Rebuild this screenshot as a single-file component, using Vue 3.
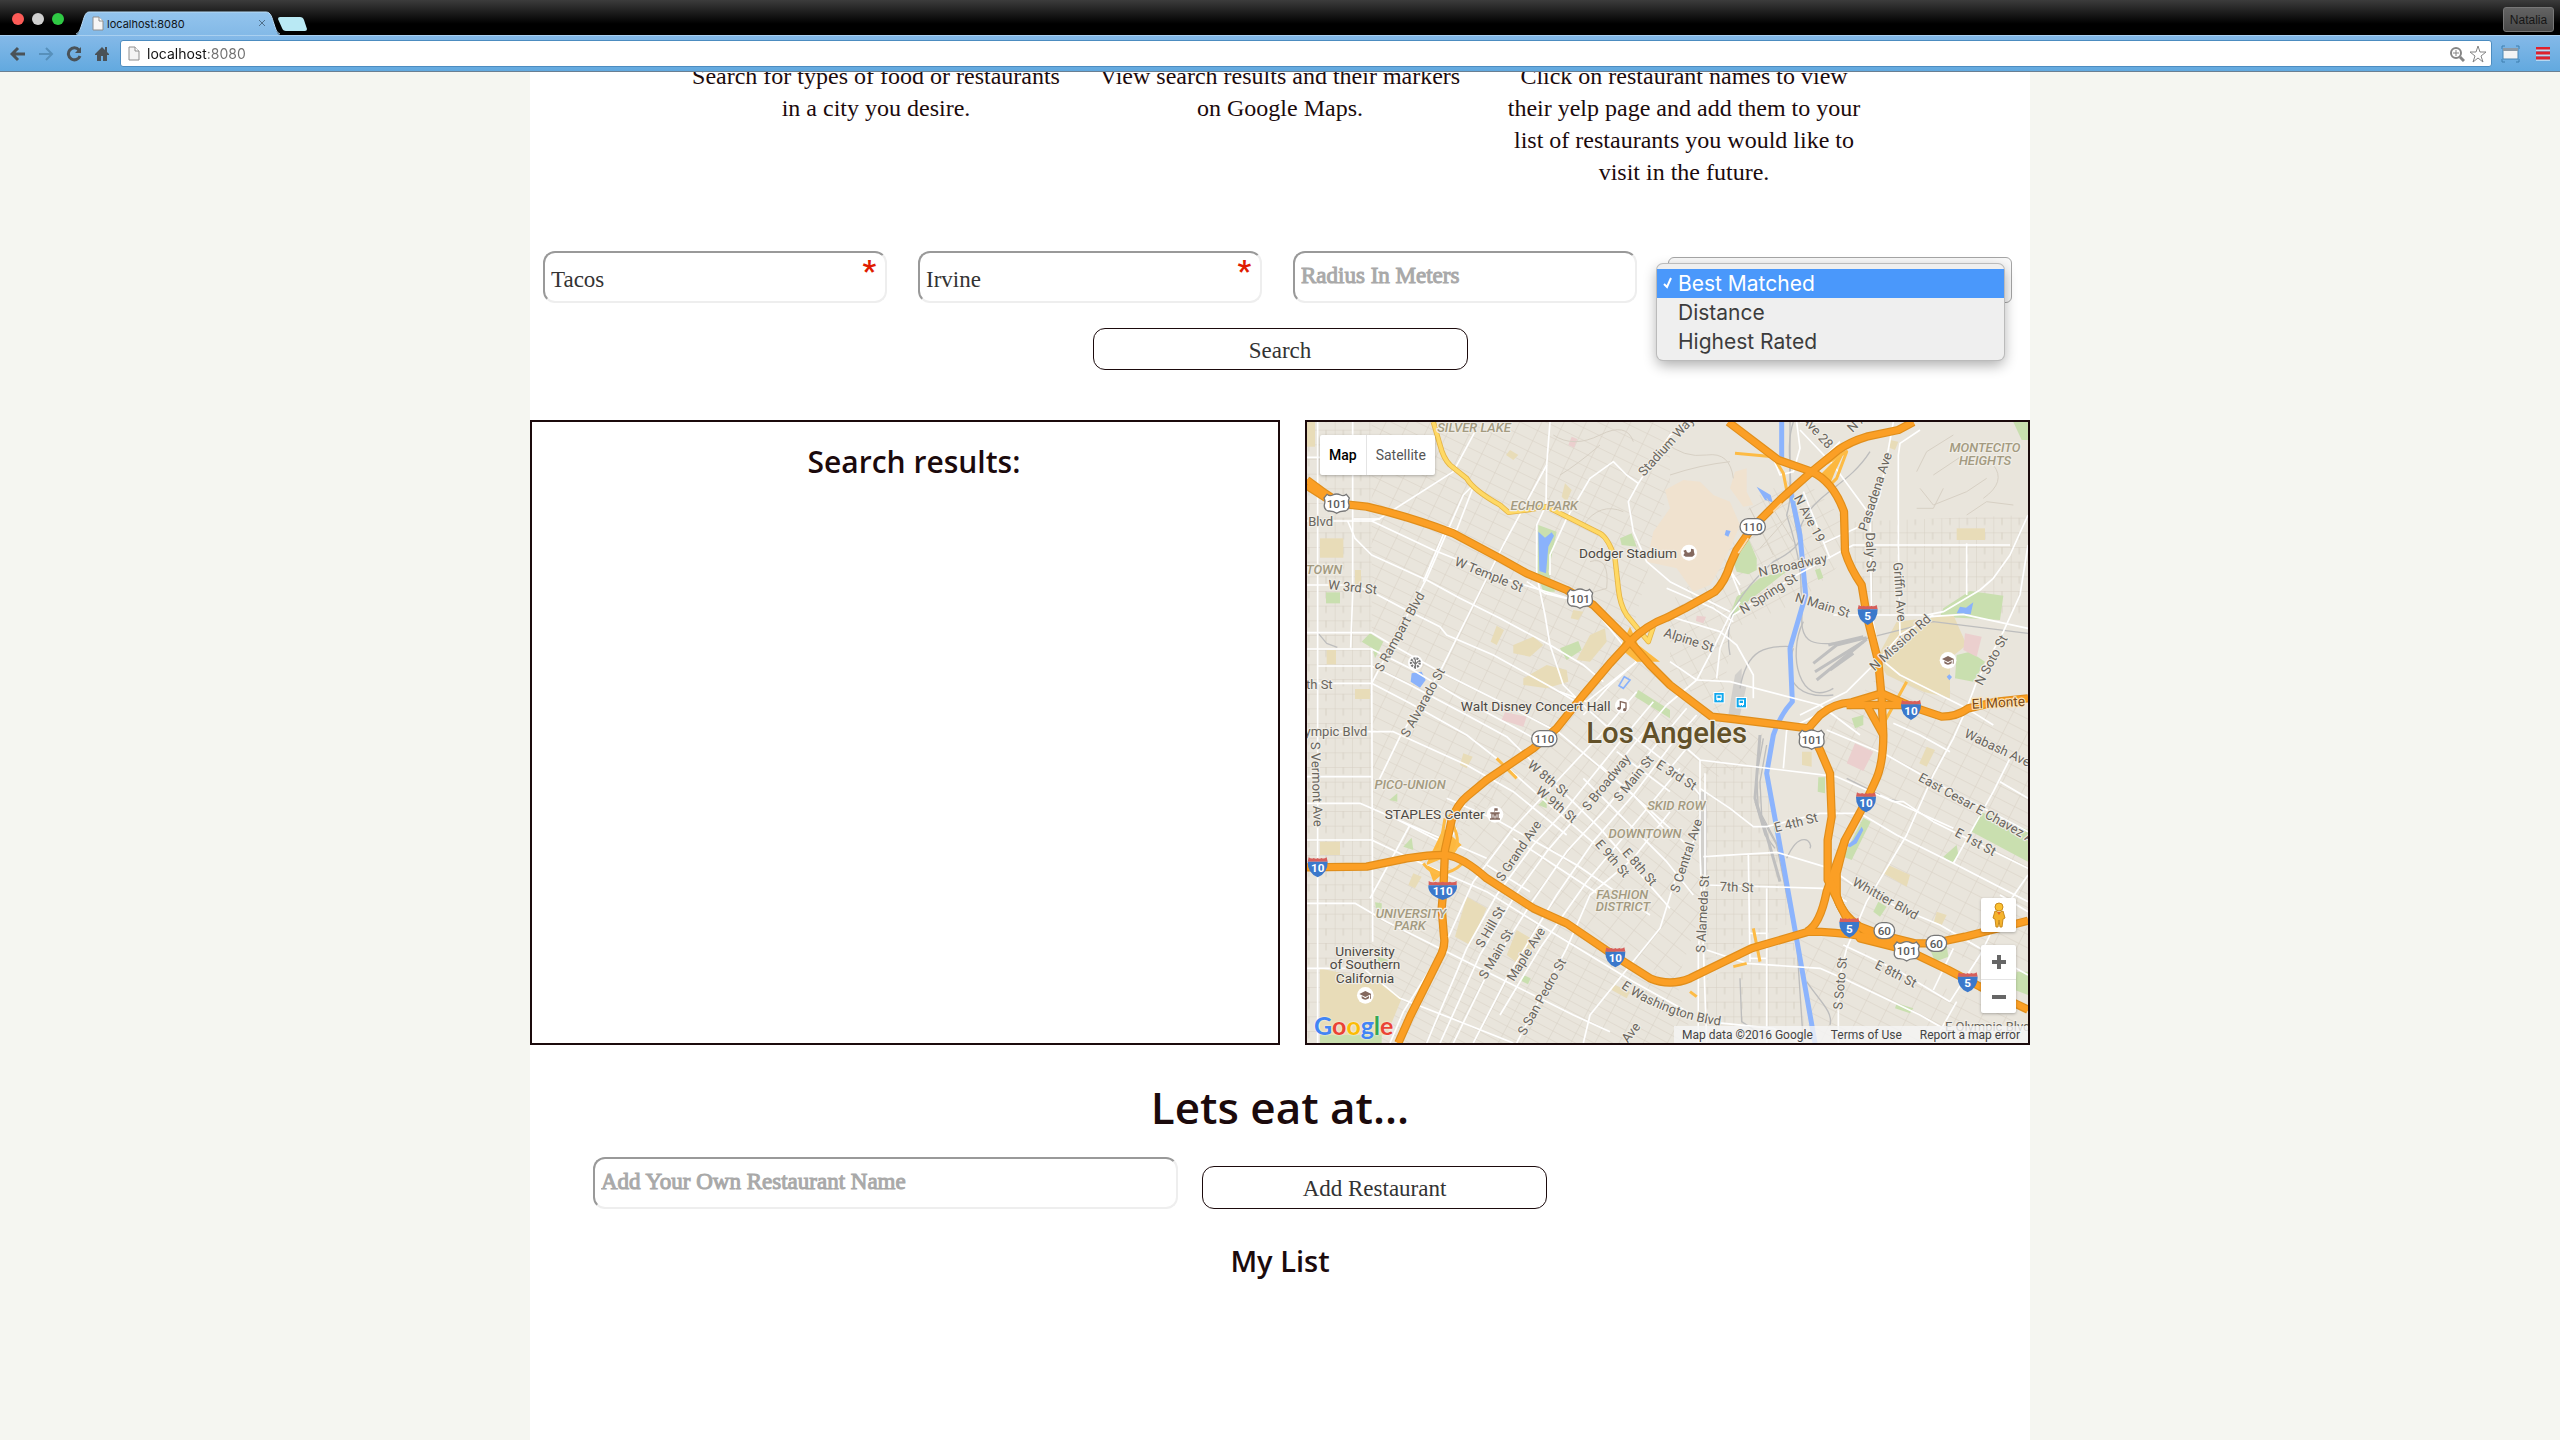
<script setup>
import { ref } from 'vue'

const food = ref('Tacos')
const city = ref('Irvine')
const radius = ref('')
const sort = ref('Best Matched')
const sortOptions = ['Best Matched', 'Distance', 'Highest Rated']
const ownRestaurant = ref('')
const url = ref('localhost:8080')

const steps = [
  'Search for types of food or restaurants in a city you desire.',
  'View search results and their markers on Google Maps.',
  'Click on restaurant names to view their yelp page and add them to your list of restaurants you would like to visit in the future.'
]

// Street network, in map units
const blocks = [
  { grid: 'gridStraight', d: 'M21 21H215V1884H21Z' },
  { grid: 'gridWest', d: 'M215 21H1110V200L990 680L760 960L430 1320L215 1260Z' },
  { grid: 'gridDowntown', d: 'M990 680L1240 910L1400 960L1380 1030L1220 1100L1200 1500L1130 1700L940 1600L440 1320L560 1100L760 960Z' },
  { grid: 'gridSouth', d: 'M215 1260L440 1320L940 1610L1130 1700L1180 1884H215Z' },
  { grid: 'gridStraight', d: 'M1660 320L2184 300V600H1700L1660 480Z' },
  { grid: 'gridNorth', d: 'M1110 560L1280 420L1360 250L1500 180L1620 300L1640 430L1500 560L1300 640L1260 900L1110 780Z' },
  { grid: 'gridStraight', d: 'M1210 1040L1390 1060L1480 1520L1210 1640Z' },
  { grid: 'gridEast', d: 'M1560 960L1740 780L2184 880V1700L1640 1500L1600 1300Z' },
  { grid: 'gridEast', d: 'M1600 1570L2184 1830V1884H1530L1500 1570Z' },
  { grid: 'gridStraight', d: 'M1200 1700L1480 1570L1520 1884H1180Z' }
]

const areas = [
  { c: 'stadium', d: 'M1095 225L1150 195L1200 200L1240 240L1290 260L1320 330L1290 400L1260 460L1230 510L1180 530L1130 460L1040 440L1060 350L1110 280Z' },
  { c: 'stadium', d: 'M1305 170L1340 160L1340 230L1360 270L1330 275L1290 220Z' },
  { c: 'green', d: 'M715 330L770 350L745 470L765 530L730 530L712 480Z' },
  { c: 'green', d: 'M960 370L995 355L1010 395L965 390Z' },
  { c: 'green', d: 'M78 532H120V565H78Z' },
  { c: 'green', d: 'M185 680L210 655L250 680L225 730L218 700Z' },
  { c: 'green', d: 'M780 700L835 678L845 705L800 735Z' },
  { c: 'green', d: 'M1015 825L1110 885V910L1005 845Z' },
  { c: 'green', d: 'M1345 370L1370 430L1370 465L1345 478L1310 470L1300 440Z' },
  { c: 'green', d: 'M1290 600L1310 545L1380 490L1475 458L1420 500L1330 570L1300 605Z' },
  { c: 'green', d: 'M1545 465L1560 460L1570 488L1555 495Z' },
  { c: 'green', d: 'M2010 528L2110 542L2100 615L1920 605L1930 580Z' },
  { c: 'green', d: 'M1970 720L2010 710L2055 740L2020 800L1965 790Z' },
  { c: 'green', d: 'M1655 910L1690 900L1690 930L1665 940Z' },
  { c: 'green', d: 'M2140 21H2184V75H2165Z' },
  { c: 'green', d: 'M1690 1208L1712 1220L1655 1335L1630 1325Z' },
  { c: 'green', d: 'M2040 1190L2184 1245V1340L2015 1250Z' },
  { c: 'green', d: 'M1555 1087H1575V1135L1553 1130Z' },
  { c: 'green', d: 'M1930 1325L1970 1290L1975 1320L1955 1345Z' },
  { c: 'green', d: 'M1720 1490L1735 1460L1760 1475L1740 1505Z' },
  { c: 'green', d: 'M1885 1590L1940 1590L1945 1625L1905 1640Z' },
  { c: 'green', d: 'M2150 1670H2184V1740L2145 1725Z' },
  { c: 'green', d: 'M1790 1765L1840 1780L1830 1795L1785 1780Z' },
  { c: 'green', d: 'M60 1860H245V1884H60Z' },
  { c: 'green', d: 'M75 1690Q90 1675 105 1690V1710L85 1715ZM105 1700L130 1690L125 1730L100 1745ZM125 1745L150 1758L145 1770L122 1760ZM225 1750L250 1755L245 1790L228 1780ZM195 1790L225 1800L215 1820L192 1808Z' },
  { c: 'green', d: 'M235 1625L265 1635L250 1655L232 1648Z' },
  { c: 'green', d: 'M268 1155L292 1135V1160Z' },
  { c: 'green', d: 'M310 1295L335 1268L340 1305Z' },
  { c: 'green', d: 'M715 1170L740 1145V1180Z' },
  { c: 'green', d: 'M225 1462L245 1465V1485L228 1480Z' },
  { c: 'green', d: 'M670 1680L692 1690L684 1708L664 1698Z' },
  { c: 'tan', d: 'M60 370H130V428H60Z' },
  { c: 'tan', d: 'M21 21H45V95H21Z' },
  { c: 'tan', d: 'M165 465H183V520H165Z' },
  { c: 'tan', d: 'M80 705H108V748H80Z' },
  { c: 'tan', d: 'M165 822H210V852H165Z' },
  { c: 'tan', d: 'M630 105L655 120L640 135L618 120Z' },
  { c: 'tan', d: 'M795 205L815 225L800 260L785 245Z' },
  { c: 'tan', d: 'M590 632L612 645L590 690L572 680Z' },
  { c: 'tan', d: 'M640 690L700 665L730 690L690 725L640 715Z' },
  { c: 'tan', d: 'M670 790L740 750L800 765L805 800L740 820L670 810Z' },
  { c: 'tan', d: 'M870 660L915 640L920 680L870 740L830 735Z' },
  { c: 'tan', d: 'M820 585L850 590L835 615L812 610Z' },
  { c: 'tan', d: 'M500 1445L560 1480L510 1590L465 1565Z' },
  { c: 'tan', d: 'M650 1545L710 1580L660 1650L620 1620Z' },
  { c: 'tan', d: 'M60 1660L240 1700L305 1750L260 1860H60Z' },
  { c: 'tan', d: 'M60 1280H120V1320H60Z' },
  { c: 'tan', d: 'M490 1015L518 1025L500 1060L480 1050Z' },
  { c: 'tan', d: 'M340 1375L365 1385L345 1420L325 1410Z' },
  { c: 'tan', d: 'M940 1708L990 1730L980 1750L935 1725Z' },
  { c: 'tan', d: 'M1790 620L1960 600L2000 690L1950 730L1950 850L1870 830L1760 780L1730 730Z' },
  { c: 'tan', d: 'M1970 340H2055V375H1970Z' },
  { c: 'tan', d: 'M1770 75L1795 80L1785 105L1768 98Z' },
  { c: 'tan', d: 'M1765 1350L1830 1380L1820 1415L1750 1375Z' },
  { c: 'tan', d: 'M1880 995L1905 1005L1880 1055L1858 1045Z' },
  { c: 'tan', d: 'M1506 1010H1535V1055L1506 1050Z' },
  { c: 'tan', d: 'M1910 1490L1940 1500L1925 1530L1902 1520Z' },
  { c: 'pink', d: 'M1665 985L1720 1010L1690 1068L1640 1045Z' },
  { c: 'pink', d: 'M1995 655L2045 665L2030 725L1990 705Z' },
  { c: 'pink', d: 'M615 892L680 905L670 935L605 915Z' },
  { c: 'pink', d: 'M815 65L832 72L822 98L805 90Z' },
  { c: 'pink', d: 'M1190 602L1218 605L1210 625L1188 618Z' },
  { c: 'grey', d: 'M1305 780L1325 760V810H1340L1320 900H1285Z' },
  { c: 'grey', d: 'M1195 1130H1220V1380H1205Z' },
  { c: 'blue', d: 'M715 350L735 368L755 352L762 362L745 395L738 475L718 468Z' },
  { c: 'blue', d: 'M335 775L365 770L377 795L360 818L332 800Z' },
  { c: 'blue', d: 'M1370 215L1412 240L1418 262L1395 255Z' },
  { c: 'blue', d: 'M1278 345L1292 348L1285 365L1274 360Z' },
  { c: 'blue', d: 'M1970 595L1980 575L1998 578L2020 562L2012 598Z' },
  { c: 'blue', d: 'M1640 1292L1660 1275L1685 1235L1690 1245L1670 1285L1650 1297Z' },
  { c: 'blue', d: 'M1940 785L1948 778L1956 786L1948 796Z' }
]

const rails = [
  'M1480 21C1450 110 1490 200 1460 300C1500 420 1510 500 1500 600',
  'M1470 21V240L1500 400',
  'M1710 110C1640 220 1540 230 1500 340',
  'M1290 720C1270 610 1310 540 1420 440C1500 400 1510 370 1500 330',
  'M1510 560C1490 700 1530 700 1700 670L1900 620L2184 655',
  'M1320 820C1340 700 1400 690 1480 695',
  'M1480 700C1440 820 1520 850 1600 840',
  'M1510 620C1460 720 1500 880 1600 820',
  'M1390 970L1370 1080L1375 1190L1430 1290L1460 1440L1490 1580L1510 1884',
  'M1400 990L1380 1100L1385 1200L1438 1300L1470 1460L1500 1640',
  'M1365 1160L1395 1260L1425 1300',
  'M1460 1330C1500 1240 1540 1280 1530 1300',
  'M1520 1700C1560 1760 1600 1790 1590 1830',
  'M1320 1690L1325 1820L1400 1870',
  'M55 655L80 685L112 697',
  'M1640 1090L1760 1150L1800 1160'
]

const yards = ['M1540 745L1610 690L1700 668', 'M1545 770L1690 680', 'M1550 795L1700 672', 'M1590 765L1660 715', 'M1585 690L1690 665']

const streets = [
  'M53 21V1884', 'M158 21V540L152 698', 'M21 127H60',
  'M21 318H215L240 310L460 170L525 50',
  'M160 312H240', 'M143 318L165 370L215 420L380 495L480 550L600 610L750 690L850 750L910 800',
  'M215 318L400 405L640 500L810 552',
  'M21 510H160L215 530L300 575L420 635L440 660L580 720L760 820L830 862',
  'M21 653H215L260 680L420 770L600 860L780 955L1000 1140L1100 1250',
  'M21 702H215L330 760L480 850L640 935L720 980',
  'M53 753H215L330 810L500 900L620 965L900 1240L1110 1480',
  'M21 805H215L330 865L500 960L590 1030L760 1180L900 1300',
  'M21 950H215L280 950L500 1050L640 1130L800 1260',
  'M215 702L218 1580', 'M215 805L380 490L490 240L520 210', 'M370 500L440 335L470 345L520 215',
  'M225 1120L300 965L420 770L520 570L610 390L740 150L750 21',
  'M740 150L738 270L710 330V480L735 600L750 690',
  'M750 480V420L800 310L870 190L940 140L980 180L1015 205L985 260L1000 350L1040 440L1110 500L1290 590',
  'M1015 205L1110 60L1180 21', 'M810 552L880 580L1010 740', 'M680 500L735 535L800 550',
  'M21 1085H215', 'M21 1165H180L330 1230L560 1330', 'M21 1275H215L330 1330L560 1430L720 1530L1000 1700L1180 1800',
  'M21 1465H165L260 1520L440 1610L620 1700L820 1800L930 1850', 'M21 1660H190L300 1750L480 1820L640 1884',
  'M285 1210L440 1290L470 1240', 'M330 1230L210 1450', 'M270 1884L310 1790L430 1600L520 1400L640 1240L760 1110L900 960L1010 830',
  'M380 1884L500 1600L590 1440L700 1290L800 1180L960 980L1060 860', 'M420 1884L540 1620L640 1450L740 1310L860 1170L1000 990L1100 870',
  'M460 1884L570 1660L690 1470L800 1310L910 1190L1060 1000L1160 880', 'M520 1884L620 1690L770 1440L880 1280L1000 1140L1120 980L1190 900',
  'M600 1800L720 1600L860 1400L1000 1230L1140 1060', 'M650 1884L800 1600L870 1440L1000 1330L1110 1190',
  'M850 1884L870 1800L1080 1540L1130 1380L1190 1260', 'M750 690L790 810L860 880L960 970',
  'M780 830L860 860L1010 740', 'M1010 740L930 810L850 900', 'M900 1050L1110 1240L1180 1310', 'M850 1090L1100 1340L1180 1440',
  'M640 1270L900 1440', 'M440 1150L600 1220L830 1350L1050 1500', 'M560 1350L690 1430', 'M980 950L1160 1090L1200 1140',
  'M950 1010L1110 1130', 'M1110 1060L1160 1000L1200 1035L1610 1085L1780 1160H1810L1900 1220L2184 1360',
  'M1200 1035V1310L1220 1884', 'M1215 1075V1400L1195 1600V1884', 'M1200 1120L1290 1180L1360 1235H1400L1560 1195L1680 1195',
  'M1210 1325L1430 1312L1590 1360L1660 1410L1800 1480L1920 1530L2040 1600L2184 1680', 'M1220 1410L1570 1420L1640 1460',
  'M1220 1605L1340 1645L1560 1660L1640 1695L1860 1800L2000 1880', 'M1220 1820L1420 1840L1500 1884',
  'M1345 1320L1350 1640', 'M1400 1420V1884', 'M1350 1555H1400', 'M1350 1630H1400',
  'M1100 520L1240 580L1300 620', 'M1095 600L1260 650L1310 690L1360 780V850', 'M1190 795L1290 800L1560 870L1600 900L1680 960',
  'M1110 740L1190 795L1240 700L1290 600L1320 560', 'M1190 795L1100 870', 'M1250 790L1260 700L1300 600L1490 480L1620 410L1660 390H2130',
  'M1320 540L1290 465L1320 510', 'M1490 21L1500 100L1480 170L1440 180L1420 130', 'M1500 45L1600 150L1710 300L1715 600L1740 730L1800 780L2000 880L2080 930',
  'M1500 190L1560 140L1620 80', 'M1510 230L1590 430', 'M1570 385L1710 320L1740 240L1780 21',
  'M1860 45L1800 85L1795 120V390L1800 660', 'M2184 300L2130 420L2080 490L2040 525L1930 590L1880 600H1600',
  'M2184 390L2160 540L2110 650L2030 800L2000 880L1960 970L1900 1080L1820 1260L1700 1460L1640 1600',
  'M2000 385V540', 'M1890 605L1990 598L2184 640', 'M1900 600L1800 660L1740 730L1640 830L1500 900',
  'M1500 21L1620 21', 'M1580 945L1760 1020L1900 1100L2184 1250', 'M1780 925L1860 960L1950 1010',
  'M1680 1195L1790 1260L1960 1345L2184 1460', 'M1740 1140L1960 1240', 'M2184 1150L2100 1100', 'M2130 1030L2080 1130L1960 1345',
  'M1450 1060L1460 945L1550 900', 'M1640 1600L1615 1700V1884', 'M1630 1590L1800 1670L1950 1760', 'M1950 1760L2040 1620L2100 1500L2184 1380',
  'M1900 1725L1960 1600', 'M2100 1440L2184 1490', 'M1900 1884L1970 1760'
]

const ramps = [
  'M1305 115L1420 125L1450 175L1465 250', 'M1525 175L1640 110L1610 190L1590 210', 'M1700 870L1740 945L1820 800',
  'M440 1200C490 1270 480 1320 420 1330', 'M370 1345C410 1400 470 1370 500 1330', 'M590 1030L650 1090', 'M435 1210L420 1300L360 1335',
  'M1360 1540L1380 1640', 'M1300 1655L1340 1645', 'M1170 1730L1190 1745'
]

const highways = [
  'M21 212L75 247L110 265L200 275Q330 305 460 355L600 430L680 475L800 525L880 570L990 680L1050 750L1110 810L1235 905L1300 912L1525 940',
  'M21 195L75 235L110 258',
  'M295 1884L330 1805L380 1705L425 1615Q436 1590 432 1565L425 1480L430 1425L435 1305L455 1215Q470 1170 500 1145L560 1095L700 1000L770 940L850 840L930 745L990 680Q1040 630 1100 608L1155 580L1245 530Q1275 500 1290 450L1310 405L1355 340L1445 250L1535 170L1615 105Q1650 80 1700 65L1795 45L1840 21',
  'M1285 21L1435 135L1535 170Q1600 200 1632 290L1635 410Q1650 460 1685 510L1700 600L1735 740L1745 850L1750 960Q1750 1050 1725 1100L1695 1165L1635 1275L1610 1375V1445Q1625 1500 1680 1535L1745 1560L1845 1585H1900L1995 1565L2184 1517',
  'M1525 940L1560 1005L1590 1075L1595 1205L1583 1275V1395L1640 1510L1700 1550L1810 1600L1945 1665L2040 1715L2184 1784',
  'M21 1357L200 1355L320 1330Q400 1318 440 1320Q490 1328 560 1390L700 1480L800 1525L940 1620L1050 1690Q1110 1715 1170 1690L1355 1600L1525 1550Q1600 1550 1700 1565L1800 1590',
  'M1520 1550Q1560 1530 1580 1430L1635 1275',
  'M1525 940L1560 900Q1600 865 1655 862L1745 835L1835 875L1925 905Q1970 905 2005 880L2090 860L2184 850',
  'M1640 870H1820', 'M1700 870L1750 960', 'M1590 1390L1620 1470L1680 1570L1800 1600'
]

const labels = [
  { t: 'SILVER LAKE', x: 522, y: 38, k: 'hood' }, { t: 'ECHO PARK', x: 733, y: 270, k: 'hood' }, { t: 'TOWN', x: 72, y: 462, k: 'hood' },
  { t: 'PICO-UNION', x: 330, y: 1108, k: 'hood' }, { t: 'UNIVERSITY', x: 333, y: 1495, k: 'hood' }, { t: 'PARK', x: 330, y: 1532, k: 'hood' },
  { t: 'FASHION', x: 967, y: 1438, k: 'hood' }, { t: 'DISTRICT', x: 969, y: 1475, k: 'hood' }, { t: 'DOWNTOWN', x: 1035, y: 1256, k: 'hood' },
  { t: 'SKID ROW', x: 1129, y: 1172, k: 'hood' }, { t: 'MONTECITO', x: 2055, y: 98, k: 'hood' }, { t: 'HEIGHTS', x: 2055, y: 136, k: 'hood' },
  { t: 'W Temple St', x: 567, y: 478, r: 22 }, { t: 'W 3rd St', x: 158, y: 516, r: 6 }, { t: 'Blvd', x: 62, y: 318 }, { t: 'th St', x: 58, y: 808 },
  { t: 'ympic Blvd', x: 108, y: 948 }, { t: 'S Rampart Blvd', x: 298, y: 650, r: -61 }, { t: 'S Alvarado St', x: 368, y: 862, r: -61 },
  { t: 'Stadium Way', x: 1098, y: 92, r: -48 }, { t: 'N Ave 19', x: 1529, y: 310, r: 62 }, { t: 'Ave 28', x: 1553, y: 50, r: 48 },
  { t: 'N A', x: 1670, y: 22, r: -45 }, { t: 'Pasadena Ave', x: 1725, y: 230, r: -72 }, { t: 'Daly St', x: 1713, y: 412, r: 88 },
  { t: 'Griffin Ave', x: 1800, y: 530, r: 86 }, { t: 'N Broadway', x: 1478, y: 450, r: -12 }, { t: 'N Spring St', x: 1405, y: 535, r: -32 },
  { t: 'N Main St', x: 1568, y: 570, r: 17 }, { t: 'Alpine St', x: 1167, y: 674, r: 18 }, { t: 'N Mission Rd', x: 1800, y: 682, r: -42 },
  { t: 'N Soto St', x: 2073, y: 735, r: -62 }, { t: 'El Monte', x: 2095, y: 862, r: -3, k: 'route' }, { t: 'Wabash Ave', x: 2093, y: 998, r: 25 },
  { t: 'East Cesar E Chavez A', x: 2030, y: 1178, r: 29 }, { t: 'E 1st St', x: 2027, y: 1280, r: 28 }, { t: 'Whittier Blvd', x: 1757, y: 1450, r: 29 },
  { t: 'E 4th St', x: 1488, y: 1222, r: -14 }, { t: 'E 3rd St', x: 1130, y: 1080, r: 32 }, { t: 'S Central Ave', x: 1158, y: 1322, r: -72 },
  { t: 'S Alameda St', x: 1207, y: 1497, r: -87 }, { t: '7th St', x: 1310, y: 1416, r: 2 }, { t: 'E 8th St', x: 1788, y: 1676, r: 27 },
  { t: 'S Soto St', x: 1620, y: 1705, r: -85 }, { t: 'E Olympic Blvd', x: 2063, y: 1834 }, { t: 'W 8th St', x: 745, y: 1090, r: 40 },
  { t: 'W 9th St', x: 770, y: 1168, r: 40 }, { t: 'S Broadway', x: 918, y: 1102, r: -51 }, { t: 'S Main St', x: 1000, y: 1090, r: -51 },
  { t: 'S Grand Ave', x: 655, y: 1307, r: -56 }, { t: 'E 9th St', x: 938, y: 1330, r: 49 }, { t: 'E 8th St', x: 1020, y: 1355, r: 49 },
  { t: 'S Hill St', x: 570, y: 1536, r: -60 }, { t: 'S Main St', x: 587, y: 1617, r: -60 }, { t: 'Maple Ave', x: 677, y: 1617, r: -58 },
  { t: 'S San Pedro St', x: 725, y: 1745, r: -61 }, { t: 'Ave', x: 992, y: 1852, r: -52 }, { t: 'S Vermont Ave', x: 51, y: 1108, r: 88 },
  { t: 'Dodger Stadium', x: 984, y: 415, k: 'place' }, { t: 'Walt Disney Concert Hall', x: 707, y: 872, k: 'place' },
  { t: 'STAPLES Center', x: 404, y: 1198, k: 'place' }, { t: 'University', x: 195, y: 1607, k: 'place' },
  { t: 'of Southern', x: 195, y: 1648, k: 'place' }, { t: 'California', x: 195, y: 1690, k: 'place' },
  { t: 'Los Angeles', x: 1100, y: 952, k: 'city' }
]

const usShields = [[110, 265], [840, 550], [1535, 973], [1820, 1608]]
const stateShields = [['110', 1358, 335], ['110', 733, 971], ['60', 1753, 1547], ['60', 1909, 1585]]
const interstates = [['5', 1703, 600], ['10', 1833, 885], ['10', 53, 1357], ['110', 428, 1425], ['10', 946, 1627], ['10', 1698, 1162], ['5', 1648, 1538], ['5', 2003, 1702]]
const stops = [[1257, 848], [1324, 863]]
const schools = [[196, 1741], [1944, 736]]
</script>

<template>
  <div class="browser">
    <header class="chrome">
      <div class="tabstrip">
        <div class="lights"><i class="red"></i><i class="mid"></i><i class="go"></i></div>
        <div class="tab">
          <svg class="tabshape" viewBox="0 0 204 24" aria-hidden="true">
            <defs><linearGradient id="tabfill" x2="0" y2="1"><stop stop-color="#93c4ed" /><stop offset="1" stop-color="#83b9e7" /></linearGradient></defs>
            <path d="M0 24C3 23 4 19 6 13C8 7 9 1 13 1H190C195 1 196 7 198 13C200 19 201 23 204 24Z" fill="url(#tabfill)" />
            <path d="M0 23C3 22 4 19 6 13C8 7 9 1 13 1H190C195 1 196 7 198 13C200 19 201 22 204 23" fill="none" stroke="#b9dbf5" />
          </svg>
          <svg class="page-icon" viewBox="0 0 12 15" aria-hidden="true"><path d="M1 1H7L11 5V14H1Z" fill="#f6f6f6" stroke="#8e8e8e" /><path d="M7 1V5H11" fill="#fff" stroke="#8e8e8e" /></svg>
          <span class="tab-title">localhost:8080</span>
          <button class="tab-close" aria-label="Close tab"><svg viewBox="0 0 8 8"><path d="M1 1L7 7M7 1L1 7" stroke="#4f6f8b" /></svg></button>
        </div>
        <button class="new-tab" aria-label="New tab"><svg viewBox="0 0 32 16"><path d="M3 1H23Q26 1 27 4L30 13Q30 15 28 15H9Q6 15 5 12L1 3Q1 1 3 1Z" fill="#b9e9f4" /></svg></button>
        <button class="profile">Natalia</button>
      </div>
      <div class="toolbar">
        <div class="nav">
          <button aria-label="Back"><svg viewBox="0 0 16 16"><path d="M15 8H3M8 2L2 8L8 14" fill="none" stroke="#4a5258" stroke-width="3" /></svg></button>
          <button aria-label="Forward"><svg viewBox="0 0 16 16"><path d="M1 8H13M8 2L14 8L8 14" fill="none" stroke="#5790bb" stroke-width="2" /></svg></button>
          <button aria-label="Reload"><svg viewBox="0 0 16 16"><path d="M13 4A6 6 0 1 0 14 10" fill="none" stroke="#4a5258" stroke-width="3" /><path d="M15 1V7H9Z" fill="#4a5258" /></svg></button>
          <button aria-label="Home"><svg viewBox="0 0 16 16"><path d="M8 1L1 8V9H3V15H7V10H9V15H13V9H15V8L13 6V1H11V4Z" fill="#4a5258" /></svg></button>
        </div>
        <div class="omnibox">
          <svg class="page-icon" viewBox="0 0 12 15" aria-hidden="true"><path d="M1 1H7L11 5V14H1Z" fill="#f4f4f4" stroke="#8e8e8e" /><path d="M7 1V5H11" fill="#fff" stroke="#8e8e8e" /></svg>
          <input v-model="url" class="url" aria-label="Address" />
          <button class="zoom-icon" aria-label="Zoom"><svg viewBox="0 0 16 16"><circle cx="7" cy="7" r="5" fill="none" stroke="#858585" stroke-width="2" /><path d="M11 11L15 15" stroke="#858585" stroke-width="3" /><path d="M4 7H10M7 4V10" stroke="#858585" /></svg></button>
          <button class="star" aria-label="Bookmark"><svg viewBox="0 0 18 18"><path d="M9 1L11 7H17L12 11L14 17L9 13L4 17L6 11L1 7H7Z" fill="#fff" stroke="#858585" stroke-linejoin="round" /></svg></button>
        </div>
        <div class="extras">
          <button aria-label="Window size"><svg viewBox="0 0 19 18"><path d="M1 4V1H4M15 1H18V4M18 14V17H15M4 17H1V14" fill="none" stroke="#3f7eae" /><path d="M2 4H17V14H2Z" fill="#f4f4f4" stroke="#4b86b3" /><path d="M2 3H17V6H2Z" fill="#8d9aa5" /></svg></button>
          <button class="menu" aria-label="Menu"><svg viewBox="0 0 14 14"><path d="M0 3H14M0 8H14M0 13H14" stroke="#fff" /><path d="M0 1H14M0 6H14M0 11H14" stroke="#e0202c" stroke-width="3" /></svg></button>
        </div>
      </div>
    </header>

    <main class="page">
      <section class="guide">
        <p v-for="step in steps" :key="step">{{ step }}</p>
      </section>

      <form class="search" @submit.prevent>
        <div class="fields">
          <div class="field">
            <input v-model="food" aria-label="Food" /><span class="required" aria-hidden="true">*</span>
          </div>
          <div class="field">
            <input v-model="city" aria-label="City" /><span class="required" aria-hidden="true">*</span>
          </div>
          <div class="field">
            <input v-model="radius" placeholder="Radius In Meters" aria-label="Radius In Meters" />
          </div>
          <div class="field">
            <select v-model="sort" aria-label="Sort by"><option v-for="o in sortOptions" :key="o">{{ o }}</option></select>
            <ul class="options" role="listbox">
              <li v-for="o in sortOptions" :key="o" role="option" :aria-selected="o === sort" :class="{ chosen: o === sort }" @click="sort = o">
                <svg v-if="o === sort" viewBox="0 0 10 12" aria-hidden="true"><path d="M1 7L4 10L8 1" fill="none" stroke="#fff" stroke-width="2" /></svg>{{ o }}
              </li>
            </ul>
          </div>
        </div>
        <button class="outline search-button">Search</button>
      </form>

      <section class="panels">
        <div class="results"><h3>Search results:</h3></div>
        <div class="map">
          <svg class="canvas" viewBox="21 21 2163 1863" preserveAspectRatio="xMidYMid slice" role="img" aria-label="Map of Los Angeles">
            <defs>
              <pattern id="gridStraight" width="52" height="44" patternUnits="userSpaceOnUse"><path d="M0 0H52M0 0V44M26 0V22" class="lane" /></pattern>
              <pattern id="gridWest" width="60" height="34" patternUnits="userSpaceOnUse" patternTransform="rotate(26)"><path d="M0 0H60M0 0V34" class="lane" /></pattern>
              <pattern id="gridDowntown" width="60" height="40" patternUnits="userSpaceOnUse" patternTransform="rotate(38)"><path d="M0 0H60M0 0V40" class="lane" /></pattern>
              <pattern id="gridSouth" width="64" height="26" patternUnits="userSpaceOnUse" patternTransform="rotate(28)"><path d="M0 0H64M0 0V26" class="lane" /></pattern>
              <pattern id="gridNorth" width="46" height="40" patternUnits="userSpaceOnUse" patternTransform="rotate(-28)"><path d="M0 0H46M0 0V40" class="lane" /></pattern>
              <pattern id="gridEast" width="66" height="36" patternUnits="userSpaceOnUse" patternTransform="rotate(27)"><path d="M0 0H66M0 0V36" class="lane" /></pattern>
              <path id="washington" d="M962 1718Q1090 1806 1260 1832" />
            </defs>
            <rect x="21" y="21" width="2163" height="1863" fill="#e9e5dc" />
            <path v-for="(b, i) in blocks" :key="'b' + i" :d="b.d" :fill="`url(#${b.grid})`" />
            <path v-for="(a, i) in areas" :key="'a' + i" :d="a.d" :class="a.c" />
            <g class="lane">
              <path d="M1095 80Q1150 130 1220 120T1300 190M1110 180Q1200 150 1290 140M1350 280L1420 420M1400 250L1480 380M1380 400L1470 300M760 60Q820 100 900 60T1000 80M780 180Q830 150 900 90M850 330Q900 260 970 290M870 440Q930 420 920 520L850 540" />
              <path d="M1850 170L1880 110L1960 60M1860 220L1900 270L2000 230L2060 190M1850 280H1900L1930 220M2080 150Q2120 200 2050 250M2000 300L2060 260L2140 270M1900 180L1990 120" />
            </g>
            <path v-for="(r, i) in rails" :key="'r' + i" :d="r" class="rail" />
            <path v-for="(y, i) in yards" :key="'y' + i" :d="y" class="yard" />
            <path d="M1380 960L1365 1150L1400 1260L1440 1400" class="yard" />
            <path d="M1445 21V130" class="river" />
            <path d="M1470 220L1500 360L1517 540L1470 700L1477 860Q1440 900 1420 960L1400 1075L1435 1265L1485 1545L1545 1884" class="river" />
            <path d="M973 785L990 795L970 820L957 812Z" fill="#e9e5dc" stroke="#8ab2fb" stroke-width="5" />
            <path v-for="(s, i) in streets" :key="'s' + i" :d="s" class="street" />
            <path d="M990 635L1015 690L1080 740L1010 740L960 700ZM430 1240L485 1290L430 1330L380 1350L430 1375L400 1400L380 1345ZM1610 130L1635 108L1605 170L1585 220L1560 180Z" fill="#fdb83f" />
            <path v-for="(h, i) in ramps" :key="'t' + i" :d="h" class="ramp" />
            <path v-for="c in ['edge', 'core']" :key="c" :class="c" d="M400 21L420 90Q430 130 450 150L500 190Q520 225 600 270L625 292L680 285L740 275L800 305L900 355Q925 370 945 430L955 520Q960 570 980 600L1045 680L1060 635" />
            <path v-for="(h, i) in highways" :key="'he' + i" :d="h" class="highway-edge" />
            <path v-for="(h, i) in highways" :key="'hc' + i" :d="h" class="highway" />
            <path d="M1445 265L1420 290M1345 370L1315 415" stroke="#f7dcb4" stroke-width="5" />

            <g v-for="(p, i) in stops" :key="'p' + i" :transform="`translate(${p[0]} ${p[1]})`">
              <rect x="-17" y="-17" width="34" height="34" fill="#fff" /><rect x="-14" y="-14" width="28" height="28" fill="#11a9ee" />
              <path d="M-8 -9H8V7H5V10H2V7H-2V10H-5V7H-8Z" fill="#fff" /><path d="M-5 -6H5V1H-5Z" fill="#11a9ee" />
            </g>
            <g v-for="(p, i) in schools" :key="'c' + i" :transform="`translate(${p[0]} ${p[1]})`">
              <circle r="25" fill="#fff" /><path d="M-18 -4L0 -13L18 -4L0 5ZM-11 2V9Q0 17 11 9V2L0 9ZM15 -3H17V10H14Z" fill="#84695f" />
            </g>
            <g transform="translate(967 872)"><circle r="22" fill="#fff" /><path d="M-6 8V-12L11 -8V11" fill="none" stroke="#84695f" stroke-width="4" /><circle cx="-10" cy="8" r="5" fill="#84695f" /><circle cx="7" cy="12" r="5" fill="#84695f" /></g>
            <g transform="translate(585 1198)"><circle r="25" fill="#fff" /><path d="M-2 -18H8V-11H0V-8H-2ZM-14 -6H14V-2H11V12H15V16H-15V12H-11V-2H-14Z" fill="#84695f" /><path d="M-6 0V10M6 0V10M0 4V12" stroke="#fff" stroke-width="3" /></g>
            <g transform="translate(1167 413)"><circle r="24" fill="#fff" /><path d="M-17 -6L-9 -9L-6 -1Q2 2 6 -4V-12L14 -10L15 -2L17 6L10 12H-10L-17 8L-13 1Z" fill="#84695f" /></g>
            <g transform="translate(346 743)"><circle r="22" fill="#fff" /><circle r="13" fill="none" stroke="#777" stroke-width="7" stroke-dasharray="6 3" /><path d="M0 -10V18M-8 -4L0 5L8 -4" fill="none" stroke="#777" stroke-width="4" /></g>

            <text v-for="(l, i) in labels" :key="'l' + i" :class="['label', l.k || 'road']" :x="l.x" :y="l.y" dy="0.36em" :transform="`rotate(${l.r || 0} ${l.x} ${l.y})`">{{ l.t }}</text>
            <text class="label road start"><textPath href="#washington">E Washington Blvd</textPath></text>

            <g v-for="(s, i) in usShields" :key="'u' + i" :transform="`translate(${s[0]} ${s[1]})`">
              <path d="M-29 -27Q-20 -20 -12 -25Q0 -31 12 -25Q20 -20 29 -27L38 -16Q33 -6 37 4Q39 18 26 23Q10 22 0 30Q-10 22 -26 23Q-39 18 -37 4Q-33 -6 -38 -16Z" class="plate" />
              <text class="number" y="13">101</text>
            </g>
            <g v-for="(s, i) in stateShields" :key="'o' + i" :transform="`translate(${s[1]} ${s[2]})`">
              <rect :x="s[0].length > 2 ? -38 : -31" y="-24" :width="s[0].length > 2 ? 76 : 62" height="48" rx="24" class="plate" />
              <text class="number" y="13">{{ s[0] }}</text>
            </g>
            <g v-for="(s, i) in interstates" :key="'i' + i" :transform="`translate(${s[1]} ${s[2]})`">
              <g v-if="s[0].length > 2">
                <path d="M-42 -27Q-32 -21 -22 -25Q-10 -21 0 -25Q10 -21 22 -25Q32 -21 42 -27V-14H-42Z" fill="#d65f5b" />
                <path d="M-43 -14H43Q45 16 0 30Q-45 16 -43 -14Z" fill="#3b78cb" />
              </g>
              <g v-else>
                <path d="M-27 -30Q-18 -24 -12 -28Q-4 -24 0 -28Q4 -24 12 -28Q18 -24 27 -30L30 -17H-30Z" fill="#d65f5b" />
                <path d="M-30 -17H30Q31 16 0 30Q-31 16 -30 -17Z" fill="#3b78cb" />
              </g>
              <text class="number inter" y="15">{{ s[0] }}</text>
            </g>
          </svg>

          <div class="map-type">
            <button class="active">Map</button><button>Satellite</button>
          </div>
          <div class="map-tools">
            <button class="pegman" aria-label="Street View"><svg viewBox="0 0 16 26"><path d="M4 9Q8 12 12 9L14 16L12 17L11 25H9L8 18L7 25H5L4 17L2 16Z" fill="#f5b32d" stroke="#c98a1c" /><circle cx="8" cy="5" r="4" fill="#fbc02f" stroke="#c98a1c" /><path d="M6 10L8 13L10 10Z" fill="#e86a1c" /></svg></button>
            <div class="zoomer">
              <button aria-label="Zoom in"><svg viewBox="0 0 14 14"><path d="M0 7H14M7 0V14" stroke="#666" stroke-width="4" /></svg></button>
              <button aria-label="Zoom out"><svg viewBox="0 0 14 14"><path d="M0 7H14" stroke="#666" stroke-width="4" /></svg></button>
            </div>
          </div>
          <a href="#google" class="google"><b>G</b><b>o</b><b>o</b><b>g</b><b>l</b><b>e</b></a>
          <div class="credits"><span>Map data ©2016 Google</span><a href="#terms">Terms of Use</a><a href="#report">Report a map error</a></div>
        </div>
      </section>

      <h1>Lets eat at...</h1>
      <form class="add" @submit.prevent>
        <input v-model="ownRestaurant" placeholder="Add Your Own Restaurant Name" aria-label="Add Your Own Restaurant Name" />
        <button class="outline">Add Restaurant</button>
      </form>
      <h2>My List</h2>
    </main>
  </div>
</template>

<style>
body { background: #f5f6f1; }
</style>

<style scoped>
.browser { min-height: 100vh; display: flex; flex-direction: column; font-family: "Liberation Serif", serif; color: #1b0a0c; overflow: hidden; }
* { box-sizing: border-box; }
button { font: inherit; color: inherit; border: 0; padding: 0; background: none; }
svg { display: block; }

.chrome { position: relative; z-index: 2; font-family: Inter, sans-serif; flex: none; }
.tabstrip { height: 35px; display: flex; align-items: flex-end; background: linear-gradient(#3c3c3c, #000 24px); padding-right: 6px; }
.lights { display: flex; gap: 8px; padding: 0 12px 10px; width: 76px; }
.lights i { width: 12px; height: 12px; border-radius: 50%; }
.red { background: #fc5b57; }
.mid { background: #d0d0d0; }
.go { background: #2fc944; }
.tab { width: 204px; height: 24px; display: flex; align-items: center; padding: 0 14px 0 16px; position: relative; }
.tabshape { position: absolute; inset: 0; width: 204px; height: 24px; }
.page-icon { width: 12px; height: 15px; position: relative; flex: none; }
.tab-title { position: relative; margin-left: 3px; flex: 1; font-size: 11px; line-height: 20px; padding-top: 2px; color: #101418; }
.tab-close { position: relative; }
.tab-close svg { width: 8px; height: 8px; }
.new-tab { padding-bottom: 3px; margin-right: auto; margin-left: -3px; }
.new-tab svg { width: 32px; height: 16px; }
.profile { width: 51px; height: 25px; margin-bottom: 3px; border: 1px solid #777; border-radius: 3px; background: linear-gradient(#636363, #484848); color: #161616; font: 12px "Liberation Sans", sans-serif; }
.toolbar { height: 37px; display: flex; align-items: center; background: linear-gradient(#84b9e8, #62a9df); border-top: 1px solid #a9d0f0; border-bottom: 1px solid #6a7f92; padding: 0 10px; }
.nav { display: flex; gap: 12px; width: 110px; }
.nav svg { width: 16px; height: 16px; }
.omnibox { flex: 1; height: 27px; display: flex; align-items: center; background: #fff; border: 1px solid #4c8cc0; border-radius: 3px; padding: 0 4px 0 7px; }
.url { flex: 1; margin-left: 7px; border: 0; outline: 0; padding: 0; font: 14px Inter, sans-serif; color: transparent; background: linear-gradient(90deg, #111 59px, #6e6e6e 59px); background-clip: text; -webkit-background-clip: text; }
.zoom-icon svg { width: 16px; height: 16px; }
.star { margin-left: 4px; }
.star svg { width: 18px; height: 18px; }
.extras { display: flex; align-items: center; gap: 16px; margin-left: 9px; }
.extras svg { width: 19px; height: 18px; }
.extras .menu svg { width: 14px; height: 14px; }

.page { flex: 1; width: 100%; max-width: 1500px; margin: 0 auto; background: #fff; }
.guide { margin: -12px auto 0; width: 100%; max-width: 1180px; display: grid; grid-template-columns: repeat(3, 1fr); gap: 32px; padding-bottom: 63px; font-size: 24px; line-height: 32px; }
.guide p { margin: 0; text-align: center; }

.fields { display: grid; grid-template-columns: repeat(4, 1fr); }
.field { position: relative; padding: 0 18px 0 13px; height: 52px; display: flex; align-items: flex-end; }
.field input, .add input { width: 100%; height: 52px; border: 2px solid; border-color: #999 #eee #eee #999; border-radius: 12px; background: #fff; padding: 6px 6px 0; font: 23px "Liberation Serif", serif; color: #333; outline: 0; }
input::placeholder { color: #a9a9a9; opacity: 1; -webkit-text-stroke: 1px #a9a9a9; position: relative; top: -4px; }
.required { position: absolute; right: 29px; top: 4px; color: #e01b00; font: bold 30px/32px Roboto, sans-serif; }
.field select { width: 100%; height: 46px; border: 1px solid #a5a5a5; border-radius: 6px; background: #f8f8f8; font: 20px Inter, sans-serif; color: #333; padding: 0 12px; appearance: none; }
.options { position: absolute; z-index: 3; left: 2px; right: 26px; top: 13px; margin: 0; padding: 5px 0 4px; list-style: none; background: #efefef; border-radius: 6px; box-shadow: 0 0 0 1px #bbb, 0 5px 14px #0005; font: 21px/29px Inter, sans-serif; color: #3c3c3c; }
.options li { padding-left: 21px; position: relative; }
.options svg { position: absolute; left: 6px; top: 8px; width: 10px; height: 12px; }
.options .chosen { background: #4a98fb; color: #fff; }
.outline { border: 1px solid #1b0a0c; border-radius: 12px; background: #fff; color: #333; font: 23px "Liberation Serif", serif; }
.search-button { display: block; width: 25%; height: 42px; margin: 25px auto 50px; padding-top: 3px; }

.panels { display: grid; grid-template-columns: 30fr 29fr; column-gap: 25px; }
.results, .map { border: 2px solid #1b0a0c; min-width: 0; }
.map { aspect-ratio: 725 / 625; position: relative; overflow: hidden; font-family: Roboto, sans-serif; }
h1, h2, h3 { font-family: "Open Sans", sans-serif; font-weight: 600; text-align: center; margin: 0; }
h3 { font-size: 30px; line-height: 36px; padding: 22px 0 0 18px; }
.canvas { width: 100%; height: 100%; }

.lane { fill: none; stroke: #d7d0c4; stroke-width: 3; }
.green { fill: #c9dfaf; }
.tan { fill: #e8dcb8; }
.pink { fill: #ebcfce; }
.grey { fill: #d2d0cc; }
.blue { fill: #8ab2fb; }
.stadium { fill: #f0e2cf; }
.street, .rail, .yard, .river, .ramp, .edge, .core, .highway, .highway-edge { fill: none; stroke-linejoin: round; }
.street { stroke: #fff; stroke-width: 5; }
.rail { stroke: #bdbdbd; stroke-width: 4; }
.yard { stroke: #bfbfbf; stroke-width: 9; }
.river { stroke: #8cb4fd; stroke-width: 15; }
.ramp { stroke: #fdbb45; stroke-width: 9; }
.edge { stroke: #e5b446; stroke-width: 16; }
.core { stroke: #ffd965; stroke-width: 11; }
.highway-edge { stroke: #e08e1b; stroke-width: 25; }
.highway { stroke: #fb9f25; stroke-width: 18; }
.label { text-anchor: middle; paint-order: stroke; stroke: #f0ede6; stroke-width: 7; stroke-linejoin: round; }
.start { text-anchor: start; }
.road { font-size: 39px; fill: #69655d; }
.hood { font-size: 39px; font-style: italic; font-weight: 500; fill: #a39a80; }
.place { font-size: 41px; fill: #4c4843; }
.route { font-size: 41px; fill: #7c4a16; stroke: #fbe3b8; }
.city { font-size: 88px; font-weight: 500; fill: #625129; }
.plate { fill: #fff; stroke: #777; stroke-width: 4; }
.number { font-size: 35px; fill: #5b5b5b; font-weight: 500; text-anchor: middle; }
.inter { fill: #fff; font-weight: 700; }

.map-type { position: absolute; left: 13px; top: 13px; display: flex; height: 40px; background: #fff; border-radius: 2px; box-shadow: 0 1px 3px #0004; font-size: 14px; color: #555; }
.map-type button { padding: 0 9px; }
.map-type .active { font-weight: 500; color: #000; border-right: 1px solid #e4e4e4; }
.map-tools { position: absolute; right: 12px; bottom: 30px; width: 35px; display: flex; flex-direction: column; gap: 13px; }
.map-tools button { display: grid; place-items: center; width: 100%; height: 34px; }
.map-tools .pegman, .zoomer { background: #fff; border-radius: 2px; box-shadow: 0 1px 3px #0004; }
.pegman svg { width: 16px; height: 26px; }
.zoomer svg { width: 14px; height: 14px; }
.zoomer button + button { border-top: 1px solid #e4e4e4; }
.google { position: absolute; left: 7px; bottom: 0; font: 25px/36px Lato, sans-serif; text-decoration: none; }
.google b { color: #4285f4; font-weight: 700; text-shadow: 0 0 2px #fff; }
.google b:nth-child(2), .google b:nth-child(6) { color: #ea4335; }
.google b:nth-child(3) { color: #fbbc05; }
.google b:nth-child(5) { color: #34a853; }
.credits { position: absolute; right: 0; bottom: 0; padding: 2px 8px 0; background: #f5f5f5cc; display: flex; gap: 18px; font-size: 12px; line-height: 15px; color: #444; }
.credits a { color: #444; text-decoration: none; }

h1 { font-size: 44px; line-height: 52px; margin-top: 36px; }
.add { display: flex; align-items: flex-end; gap: 24px; margin-top: 24px; padding-left: 63px; }
.add input { width: 585px; }
.add .outline { width: 345px; height: 43px; padding-top: 2px; }
h2 { font-size: 29px; line-height: 36px; margin-top: 34px; }
</style>
